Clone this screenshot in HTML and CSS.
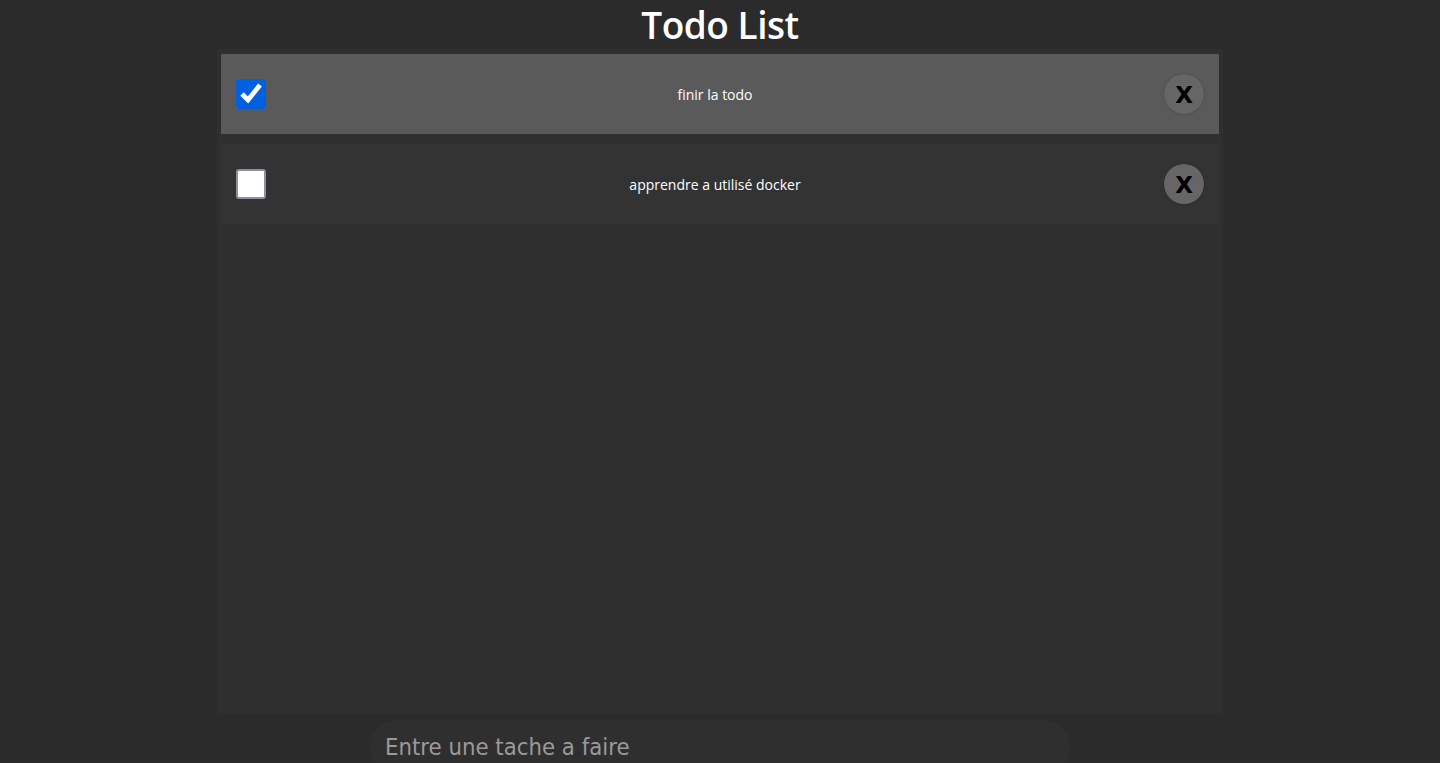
FILE: index.html
```html
<!DOCTYPE html>
<html lang="fr">
<head>
<meta charset="utf-8">
<title>Todo List</title>
<link rel="stylesheet" href="styles.css">
</head>
<body>
<main class="app">
  <h1 class="title">Todo List</h1>
  <section class="list">
    <div class="item item-done">
      <input type="checkbox" class="check" checked>
      <span class="label">finir la todo</span>
      <button class="del">X</button>
    </div>
    <div class="item">
      <input type="checkbox" class="check">
      <span class="label">apprendre a utilisé docker</span>
      <button class="del">X</button>
    </div>
  </section>
  <input type="text" class="new" placeholder="Entre une tache a faire">
</main>
</body>
</html>
```
FILE: styles.css
```css
html, body {
  margin: 0;
  padding: 0;
  background: #2b2b2b;
  height: 100%;
  overflow: hidden;
}
body {
  font-family: "Open Sans", "Noto Sans", sans-serif;
  color: #fff;
}
.app {
  display: flex;
  flex-direction: column;
  align-items: center;
}
.title {
  margin: 0;
  height: 49px;
  line-height: 50px;
  font-size: 37px;
  font-weight: 600;
  color: #fff;
  letter-spacing: -0.5px;
}
.list {
  width: 998px;
  height: 656px;
  padding: 5px 4px;
  background: #2f2f2f;
  display: flex;
  flex-direction: column;
  gap: 10px;
}
.item {
  height: 80px;
  background: #333333;
  display: flex;
  align-items: center;
  padding: 0 15px;
  box-sizing: border-box;
}
.item-done {
  background: #5a5a5a;
}
.check {
  width: 30px;
  height: 30px;
  margin: 0;
  accent-color: #0060df;
}
.check:not(:checked) {
  appearance: none;
  -webkit-appearance: none;
  box-sizing: border-box;
  background: #fff;
  border: 2px solid #8f8f9d;
  border-radius: 3px;
}
.label {
  flex: 1;
  text-align: center;
  font-size: 14px;
  color: #fff;
}
.del {
  width: 40px;
  height: 40px;
  border-radius: 50%;
  border: none;
  background: #666666;
  color: #000;
  font-family: "DejaVu Sans", sans-serif;
  font-weight: bold;
  font-size: 23px;
  line-height: 42px;
  padding: 0;
  box-shadow: 0 0 2px rgba(0,0,0,0.3);
}
.new {
  margin-top: 5px;
  width: 700px;
  height: 54px;
  box-sizing: border-box;
  border: none;
  border-radius: 27px;
  background: #2f2f2f;
  padding: 0 15px;
  font-family: "DejaVu Sans Condensed", "DejaVu Sans", sans-serif;
  font-size: 23.7px;
  color: #fff;
  outline: none;
}
.new::placeholder {
  color: #9a9a9a;
}
```
